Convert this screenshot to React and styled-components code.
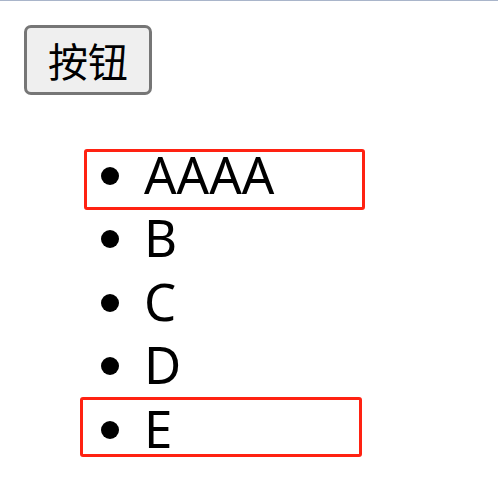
import React from "react";
import styled, { createGlobalStyle } from "styled-components";

const GlobalStyle = createGlobalStyle`
  html, body {
    margin: 0;
    padding: 0;
    background: #fff;
  }
  body {
    font-family: "Noto Sans", "Noto Sans CJK SC", sans-serif;
  }
`;

const Page = styled.div`
  position: relative;
  border-top: 1px solid #a9b5ca;
  padding: 24px;
  min-height: 460px;
  box-sizing: border-box;
`;

const Button = styled.button`
  display: block;
  box-sizing: border-box;
  width: 128px;
  height: 70px;
  padding: 0;
  font-family: "Noto Sans CJK SC", sans-serif;
  font-size: 40px;
  line-height: 1;
  color: #000;
  background: #efefef;
  border: 3px solid #767676;
  border-radius: 7px;
`;

const List = styled.ul`
  margin: 48px 0 0;
  padding-left: 120px;
  list-style: disc;
  font-size: 51px;
  line-height: 63.4px;
  color: #000;
`;

const Item = styled.li``;

const Highlight = styled.div`
  position: absolute;
  box-sizing: border-box;
  border: 3px solid #ff2212;
  border-radius: 3px;
  pointer-events: none;
  left: ${(p) => p.$x}px;
  top: ${(p) => p.$y}px;
  width: ${(p) => p.$w}px;
  height: ${(p) => p.$h}px;
`;

const items = ["AAAA", "B", "C", "D", "E"];

export default function App() {
  return (
    <>
      <GlobalStyle />
      <Page>
        <Button>按钮</Button>
        <List>
          {items.map((t) => (
            <Item key={t}>{t}</Item>
          ))}
        </List>
        <Highlight $x={84} $y={148} $w={281} $h={61} />
        <Highlight $x={80} $y={396} $w={282} $h={60} />
      </Page>
    </>
  );
}
